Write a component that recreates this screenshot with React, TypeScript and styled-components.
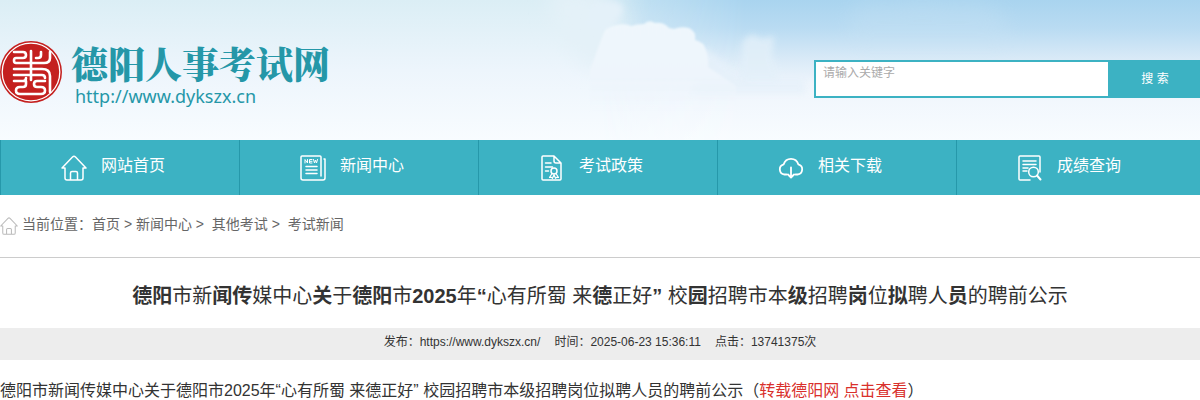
import React from "react";
import styled, { createGlobalStyle } from "styled-components";

const teal = "#3cb2c3";
const sans = '"Liberation Sans", "Noto Sans CJK SC", sans-serif';

const GlobalStyle = createGlobalStyle`
  * { box-sizing: border-box; }
  body { margin: 0; background: #fff; color: #333; font-family: ${sans}; font-size: 16px; }
  a { color: inherit; text-decoration: none; }
`;

const Header = styled.header`
  position: relative;
  display: flex;
  justify-content: space-between;
  align-items: flex-start;
  height: 140px;
  overflow: hidden;
`;

const Sky = styled.svg`
  position: absolute;
  inset: 0;
  width: 100%;
  height: 100%;
  z-index: -1;
`;

const Brand = styled.a`
  display: flex;
  gap: 8px;
  padding-top: 40px;
  color: #2597a8;
`;

const BrandText = styled.div`
  display: flex;
  flex-direction: column;
`;

const SiteName = styled.span`
  font-family: "Noto Serif CJK SC", "Noto Sans CJK SC", serif;
  font-size: 37px;
  font-weight: 900;
  line-height: 46px;
  white-space: nowrap;
`;

const SiteUrl = styled.span`
  padding-left: 4px;
  font-family: "Noto Sans", sans-serif;
  font-size: 18px;
  line-height: 20px;
`;

const SearchForm = styled.form`
  display: flex;
  width: 386px;
  height: 38px;
  margin-top: 60px;
`;

const SearchInput = styled.input`
  flex: 1;
  min-width: 0;
  padding: 0 7px 12px;
  border: 2px solid ${teal};
  border-right: 0;
  border-radius: 0;
  background: #fff;
  font-family: ${sans};
  font-size: 12px;
  &::placeholder { color: #aaa; opacity: 1; }
`;

const SearchButton = styled.button`
  width: 92px;
  padding: 0 0 4px 2px;
  border: 0;
  background: ${teal};
  color: #fff;
  font-family: ${sans};
  font-size: 12px;
`;

const Nav = styled.nav`
  display: flex;
  padding-right: 5px;
  background: ${teal};
`;

const NavItem = styled.a`
  display: flex;
  flex: 1;
  align-items: center;
  gap: 14px;
  height: 55px;
  padding-left: 60px;
  border-left: 1px solid #2698aa;
  color: #fff;
`;

const NavLabel = styled.span`
  line-height: 24px;
  padding-bottom: 4px;
`;

const LineIcon = styled.svg`
  flex: none;
  fill: none;
  stroke: currentColor;
  stroke-linecap: round;
  stroke-linejoin: round;
`;

const Crumbs = styled.nav`
  display: flex;
  align-items: center;
  gap: 4px;
  height: 63px;
  border-bottom: 1px solid #ccc;
  color: #666;
  font-size: 14px;
  white-space: pre;
  svg { color: #bbb; }
`;

const CrumbText = styled.span`
  padding-bottom: 6px;
`;

const Title = styled.h1`
  margin: 0;
  padding: 21px 0 15px;
  font-size: 20px;
  line-height: 34px;
  font-weight: 400;
  text-align: center;
`;

const Meta = styled.div`
  display: flex;
  justify-content: center;
  gap: 14px;
  padding-bottom: 4px;
  background: #ededed;
  font-size: 12px;
  line-height: 28px;
`;

const Body = styled.p`
  margin: 0;
  padding-top: 16px;
  line-height: 30px;
`;

const RedLink = styled.a`
  && { color: #d9302c; }
`;

const HouseIcon = ({ size }: { size: number }) => (
  <LineIcon width={size} height={size} viewBox="0 0 26 26" strokeWidth="1.5">
    <path d="M4 13H1L11.500 2q1.500-1.400 3 0L25 13h-3v10q0 2-2 2H6q-2 0-2-2V13M9.500 25v-7q0-1.500 1.500-1.500h4q1.500 0 1.500 1.500v7" />
  </LineIcon>
);

const NewsIcon = () => (
  <LineIcon width="26" height="26" viewBox="0 0 26 26" strokeWidth="1.5">
    <path d="M21 21V2q0-1-1-1H2Q1 1 1 2v21q0 2 2 2h20q2 0 2-2V4h-1M6 11.500h11M6 15h11M6 18.500h11" />
    <path strokeWidth="1" d="M5 8V4.500L7.500 8V4.500M12 4.500H9.500V8H12M9.500 6.300H12M13.500 4.500l1 3.500 1-3 1 3 1-3.500" />
  </LineIcon>
);

const PolicyIcon = () => (
  <LineIcon width="26" height="26" viewBox="0 0 26 26" strokeWidth="1.5">
    <path d="M15 1H4Q3 1 3 2v22q0 1 1 1h17q1 0 1-1V8zM15 1v5q0 2 2 2h5M6.500 8H12M6.500 12h7M6.500 16h3" />
    <circle cx="15" cy="16" r="3" />
    <path strokeWidth="1.2" d="m13 18.500-2.500 4 2-.2 1 1 1.500-3.500 1.500 3.500 1-1 2 .2-2.500-4" />
  </LineIcon>
);

const CloudIcon = () => (
  <LineIcon width="26" height="26" viewBox="0 0 26 26" strokeWidth="1.8">
    <path d="M8.500 19.500H6.500a5.200 5.200 0 0 1-.8-10.200 7.600 7.600 0 0 1 14.600 0 5.200 5.200 0 0 1-.8 10.200h-2M13 12.500V22M10 19.500l3 3 3-3" />
  </LineIcon>
);

const QueryIcon = () => (
  <LineIcon width="26" height="26" viewBox="0 0 26 26" strokeWidth="1.5">
    <path d="M13 25H3q-1 0-1-1V2q0-1 1-1h19q1 0 1 1v15M6 6h13M6 9.500h13M6 13h5M6 16h4" />
    <circle cx="16.500" cy="17" r="4.800" />
    <path strokeWidth="2" d="m20 20.500 3.500 4" />
  </LineIcon>
);

const Seal = () => (
  <svg width="63" height="64" viewBox="0 0 63 64" aria-hidden="true">
    <circle cx="31" cy="32" r="31" fill="#c4201f" />
    <circle cx="31" cy="32" r="28.800" fill="none" stroke="#fff" strokeWidth="1.300" />
    <g fill="none" stroke="#fff" strokeWidth="2.600" strokeLinejoin="round" strokeLinecap="round">
      <path d="M14 12h9q3 0 3 3t-3 3h-7q-2 0-2 2.500t2 2.500h28q6 0 6-5v-6M41 12v3q0 3-3 3h-2M31 11v29" />
      <path d="M14 29h28q8 0 8 7v16M14 35h28q3 0 3 3" />
      <path d="M14 41h9q3 0 3-3M26 41v3q0 3-3 3h-3q-4 0-4 3.500t4 3.500h21q4 0 4-3.500T41 47h-4q-3 0-3-3t3-3h8" />
    </g>
  </svg>
);

const SkyArt = () => (
  <Sky viewBox="0 0 1200 140" preserveAspectRatio="none" aria-hidden="true">
    <defs>
      <linearGradient id="haze" x2="0" y2="1">
        <stop offset="0" stopColor="#dbeef5" />
        <stop offset=".5" stopColor="#edf5fc" />
        <stop offset="1" stopColor="#f8fcff" />
      </linearGradient>
      <linearGradient id="blue" x2="0" y2="1">
        <stop offset="0" stopColor="#a9d4ef" />
        <stop offset=".2" stopColor="#b9dbf2" />
        <stop offset=".42" stopColor="#d9eaf7" />
        <stop offset=".6" stopColor="#eff5fc" />
        <stop offset="1" stopColor="#f8fcff" />
      </linearGradient>
      <linearGradient id="reveal">
        <stop offset=".5" stopColor="#000" />
        <stop offset=".54" stopColor="#999" />
        <stop offset=".62" stopColor="#fff" />
      </linearGradient>
      <mask id="right"><rect width="1200" height="140" fill="url(#reveal)" /></mask>
      <filter id="soft" x="-40%" y="-40%" width="180%" height="180%"><feGaussianBlur stdDeviation="10" /></filter>
      <filter id="wisp" x="-40%" y="-40%" width="180%" height="180%"><feGaussianBlur stdDeviation="3" /></filter>
      <filter id="edge"><feGaussianBlur stdDeviation="1" /></filter>
      <linearGradient id="puff" x2="0" y2="1">
        <stop offset="0" stopColor="#eff7fc" />
        <stop offset=".6" stopColor="#eef5fc" />
        <stop offset="1" stopColor="#eef5fc" stopOpacity="0" />
      </linearGradient>
    </defs>
    <rect width="1200" height="140" fill="url(#haze)" />
    <rect width="1200" height="140" fill="url(#blue)" mask="url(#right)" />
    <path filter="url(#soft)" fill="#e4f1f8" d="M550-10h40l30 28-6 48h-30l-30-40z" />
    <path filter="url(#wisp)" fill="#e4f1f9" d="M592 5q10-4 18-3 12-1 13 7 0 7-8 11l-8 12-20-6z" />
    <path filter="url(#wisp)" fill="#e6f1fa" opacity=".8" d="M705 48l30 22 20 8h50v16H690z" />
    <path filter="url(#edge)" fill="url(#puff)" d="M603 35q2-8 14-10 8-2 14 1 6-2 13-2 5-5 11-1 9-1 14 5l5 1q7-3 15-1 8 4 6 12 9 2 11 10 3 8 2 17l28 19v25H590V70z" />
    <path filter="url(#wisp)" fill="#e3f0f9" opacity=".8" d="M742 42q6-8 12-7l8 4 12-3-2 20 8 24h-40z" />
    <path filter="url(#soft)" fill="#c9e3f4" opacity=".3" d="M850 15q15-20 40-12 35-10 62 0 38-8 55 20l4 20H850z" />
  </Sky>
);

const items = [
  { label: "网站首页", icon: <HouseIcon size={26} /> },
  { label: "新闻中心", icon: <NewsIcon /> },
  { label: "考试政策", icon: <PolicyIcon /> },
  { label: "相关下载", icon: <CloudIcon /> },
  { label: "成绩查询", icon: <QueryIcon /> },
];

export default function App() {
  return (
    <>
      <GlobalStyle />
      <Header>
        <SkyArt />
        <Brand href="#">
          <Seal />
          <BrandText>
            <SiteName>德阳人事考试网</SiteName>
            <SiteUrl>http://www.dykszx.cn</SiteUrl>
          </BrandText>
        </Brand>
        <SearchForm>
          <SearchInput type="text" aria-label="请输入关键字" placeholder="请输入关键字" />
          <SearchButton type="button">搜 索</SearchButton>
        </SearchForm>
      </Header>
      <Nav>
        {items.map((item) => (
          <NavItem href="#" key={item.label}>
            {item.icon}
            <NavLabel>{item.label}</NavLabel>
          </NavItem>
        ))}
      </Nav>
      <Crumbs>
        <HouseIcon size={18} />
        <CrumbText>
          当前位置：<a href="#">首页</a> &gt; <a href="#">新闻中心</a> &gt;{"  "}
          <a href="#">其他考试</a> &gt;{"  "}<a href="#">考试新闻</a>
        </CrumbText>
      </Crumbs>
      <main>
        <Title>
          <b>德阳</b>市新<b>闻传</b>媒中心<b>关</b>于<b>德阳</b>市<b>2025</b>年<b>“</b>心有所蜀 来<b>德</b>正好<b>”</b>{" "}
          校<b>园</b>招聘市本<b>级</b>招聘<b>岗</b>位<b>拟</b>聘人<b>员</b>的聘前公示
        </Title>
        <Meta>
          <span>发布：https://www.dykszx.cn/</span>
          <span>时间：2025-06-23 15:36:11</span>
          <span>点击：13741375次</span>
        </Meta>
        <Body>
          德阳市新闻传媒中心关于德阳市2025年“心有所蜀 来德正好” 校园招聘市本级招聘岗位拟聘人员的聘前公示（<RedLink href="#">转载德阳网 点击查看</RedLink>）
        </Body>
      </main>
    </>
  );
}
